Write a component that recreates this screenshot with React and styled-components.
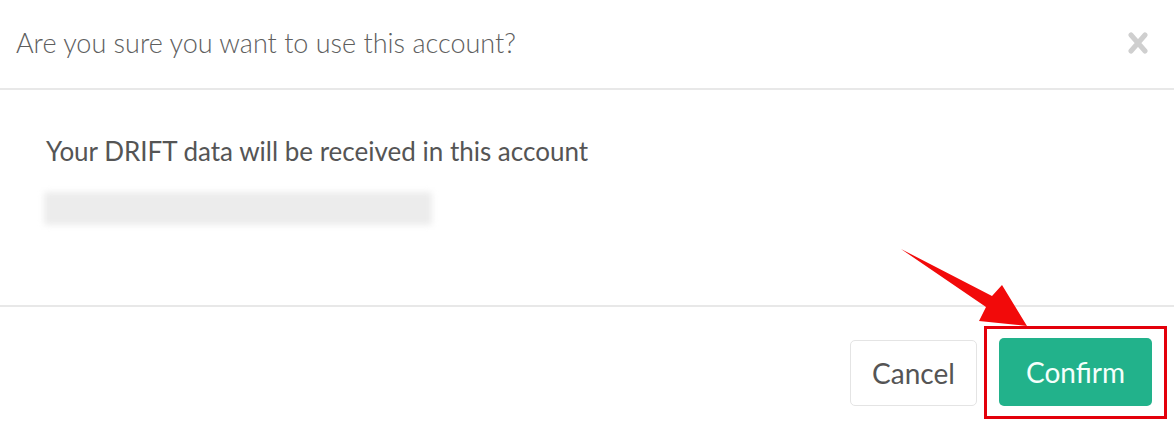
import React from "react";
import styled, { createGlobalStyle } from "styled-components";

const Global = createGlobalStyle`
  html, body { margin: 0; padding: 0; background: #fff; }
  body { font-family: Lato, "Open Sans", sans-serif; }
`;

const Page = styled.div`
  position: relative;
  width: 1174px;
  height: 426px;
  overflow: hidden;
  background: #fff;
  display: flex;
  flex-direction: column;
`;

const Header = styled.div`
  border-bottom: 2px solid #e8e8e8;
  display: flex;
  align-items: center;
  justify-content: space-between;
  padding: 0 20px 4px 16px;
  height: 84px;
`;

const Title = styled.h4`
  margin: 0;
  font-family: Lato, sans-serif;
  font-weight: 300;
  font-size: 27px;
  color: #5e5e5e;
`;

const Close = styled.button`
  border: 0;
  background: none;
  padding: 0;
  width: 20px;
  height: 22px;
  display: flex;
  align-items: center;
  justify-content: center;
  margin-top: 2px;
  margin-right: 6px;
`;

const Body = styled.div`
  flex: 1;
  border-bottom: 2px solid #e8e8e8;
  padding: 43px 46px 0;
  display: flex;
  flex-direction: column;
`;

const Message = styled.p`
  margin: 0;
  font-family: Lato, sans-serif;
  font-size: 26px;
  color: #555;
  line-height: 36px;
`;

const Blurred = styled.div`
  margin-top: 23px;
  margin-left: -2px;
  width: 388px;
  height: 33px;
  background: #ececec;
  filter: blur(3px);
  border-radius: 2px;
`;

const Footer = styled.div`
  height: 119px;
  box-sizing: border-box;
  display: flex;
  justify-content: flex-end;
  align-items: center;
  padding: 19px 7px 7px 0;
`;

const Button = styled.button`
  font-family: Lato, sans-serif;
  font-size: 28px;
  border-radius: 5px;
  cursor: pointer;
  padding: 0;
  height: ${(p) => (p.$primary ? "68px" : "66px")};
  width: ${(p) => (p.$primary ? "153px" : "127px")};
  border: ${(p) => (p.$primary ? "0" : "1px solid #e4e4e4")};
  background: ${(p) => (p.$primary ? "#22b28b" : "#fff")};
  color: ${(p) => (p.$primary ? "#f4fffb" : "#555")};
`;

const Highlight = styled.div`
  margin-left: 7px;
  border: 3px solid #e3000b;
  padding: 9px 12px 10px;
  display: flex;
`;

const Overlay = styled.svg`
  position: absolute;
  left: 0;
  top: 0;
  pointer-events: none;
`;

export default function App() {
  return (
    <>
      <Global />
      <Page>
        <Header>
          <Title>Are you sure you want to use this account?</Title>
          <Close aria-label="Close">
            <svg width="20" height="22" viewBox="0 0 20 22">
              <path d="M3 3 L17 19 M17 3 L3 19" stroke="#cfcfcf" strokeWidth="5" strokeLinecap="round" />
            </svg>
          </Close>
        </Header>
        <Body>
          <Message>Your DRIFT data will be received in this account</Message>
          <Blurred />
        </Body>
        <Footer>
          <Button>Cancel</Button>
          <Highlight>
            <Button $primary>Confirm</Button>
          </Highlight>
        </Footer>
        <Overlay width="1174" height="426" viewBox="0 0 1174 426">
          <polygon
            points="901,249 992,296 1002,285 1027,326 979,321 986,307"
            fill="#f20a0a"
          />
        </Overlay>
      </Page>
    </>
  );
}
